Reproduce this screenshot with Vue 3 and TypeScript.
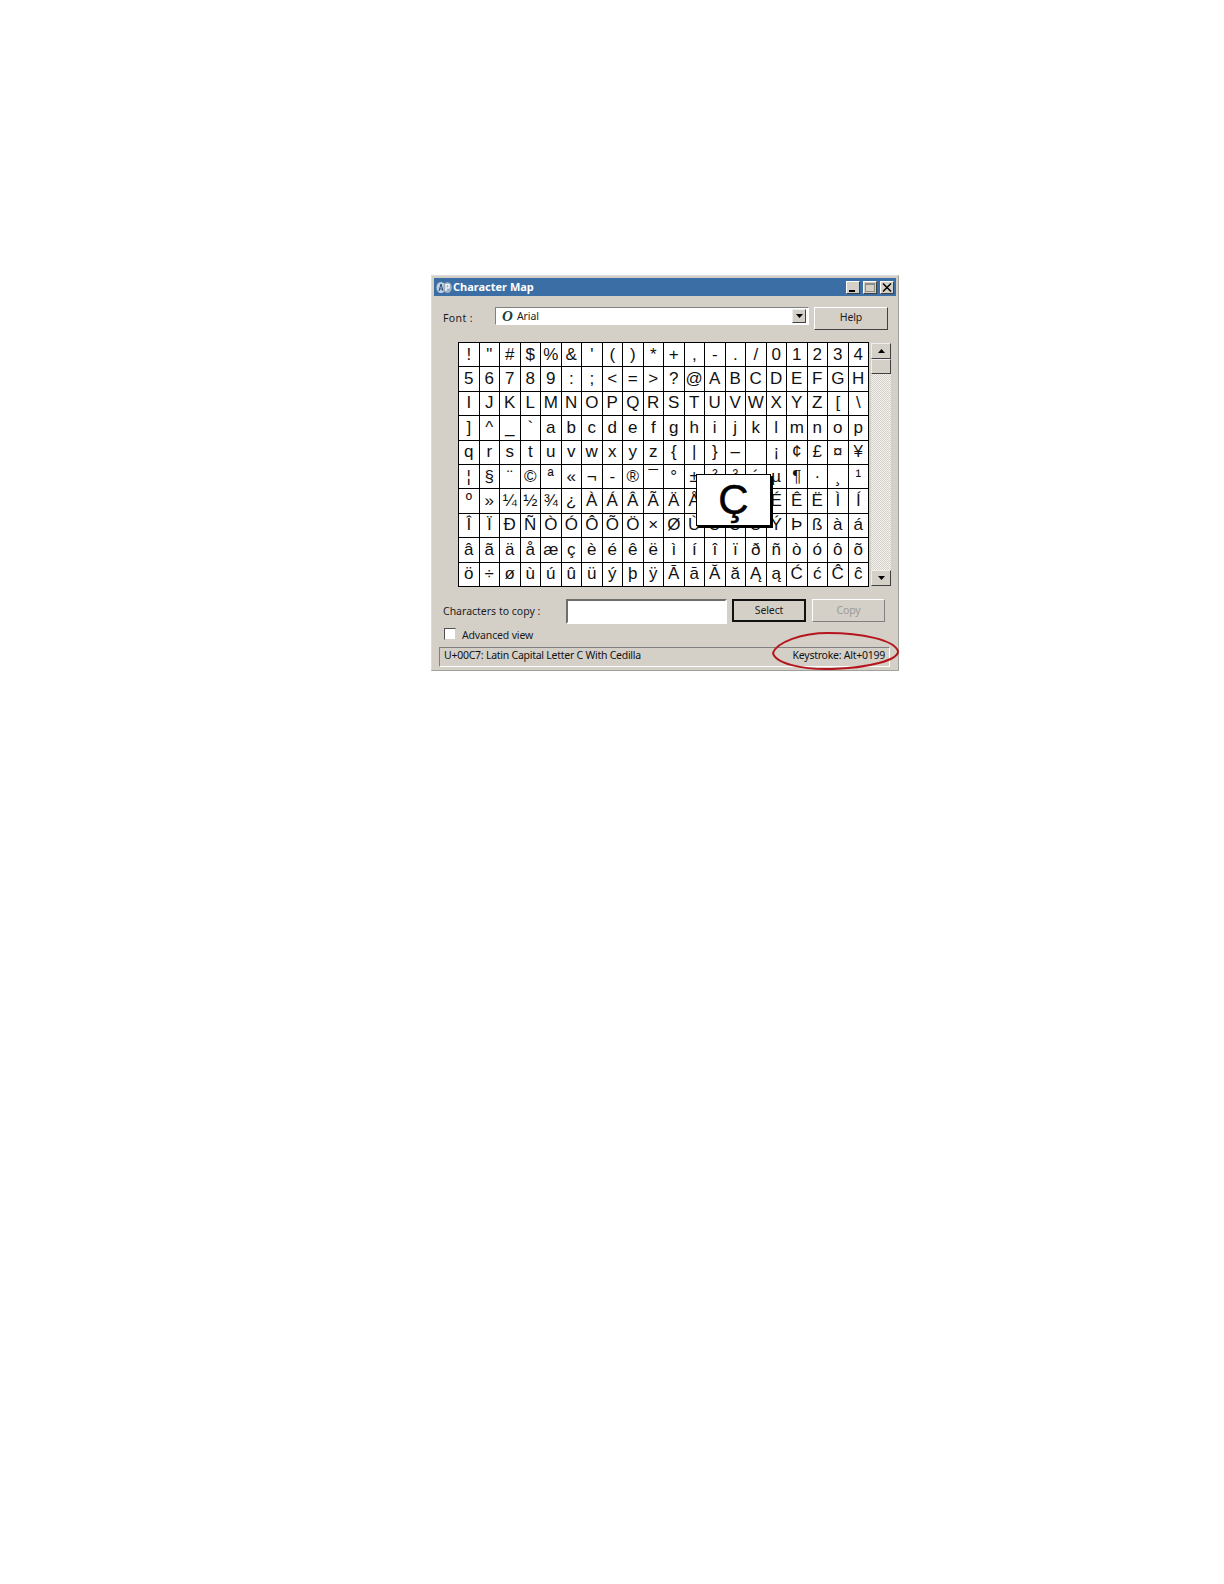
<script setup lang="ts">
const chars: string[] = Array.from(
  "!\"#$%&'()*+,-./01234" +
  "56789:;<=>?@ABCDEFGH" +
  "IJKLMNOPQRSTUVWXYZ[\\" +
  "]^_`abcdefghijklmnop" +
  "qrstuvwxyz{|}\u2013 ¡¢£¤¥" +
  "¦§¨©ª«¬-®¯°±²³´µ¶·¸¹" +
  "º»¼½¾¿ÀÁÂÃÄÅÆÇÈÉÊËÌÍ" +
  "ÎÏÐÑÒÓÔÕÖ×ØÙÚÛÜÝÞßàá" +
  "âãäåæçèéêëìíîïðñòóôõ" +
  "ö÷øùúûüýþÿĀāĂăĄąĆćĈĉ"
);
</script>

<template>
  <div class="page">
    <div class="window">
      <div class="titlebar">
        <svg class="app-icon" width="16" height="13" viewBox="0 0 16 13">
          <ellipse cx="5" cy="6.5" rx="4.5" ry="5.5" fill="#c4d0dc" />
          <ellipse cx="11.5" cy="6.5" rx="4.3" ry="5.5" fill="#9db0c4" />
          <path d="M3 10 L5 3 L7 10 M3.8 8 H6.2" stroke="#1f4e7e" stroke-width="1" fill="none" />
          <path d="M10 3 V10 M10 3.5 H13 V7 H10" stroke="#fff" stroke-width="1.2" fill="none" />
        </svg>
        <span class="title">Character Map</span>
        <div class="caption-buttons">
          <span class="cap"><svg width="12" height="11" viewBox="0 0 12 11"><rect x="2" y="8" width="6" height="2" fill="#000" /></svg></span>
          <span class="cap"><svg width="12" height="11" viewBox="0 0 12 11"><rect x="1.5" y="1.5" width="9" height="8" fill="none" stroke="#8d8d88" /><rect x="1" y="1" width="10" height="2" fill="#8d8d88" /></svg></span>
          <span class="cap"><svg width="12" height="11" viewBox="0 0 12 11"><path d="M2 1.5 L10 9.5 M10 1.5 L2 9.5" stroke="#000" stroke-width="1.5" /></svg></span>
        </div>
      </div>

      <div class="font-row">
        <span class="font-label">Font :</span>
        <div class="combo">
          <span class="font-o">O</span>
          <span class="font-name">Arial</span>
          <span class="combo-arrow"><svg width="7" height="4" viewBox="0 0 7 4"><path d="M0 0 H7 L3.5 4 Z" fill="#000" /></svg></span>
        </div>
        <div class="btn help">Help</div>
      </div>

      <div class="grid-row">
        <div class="grid">
          <div v-for="(c, i) in chars" :key="i" class="cell">{{ c }}</div>
        </div>
        <div class="scrollbar">
          <span class="sb-btn"><svg width="7" height="4" viewBox="0 0 7 4"><path d="M3.5 0 L7 4 H0 Z" fill="#000" /></svg></span>
          <span class="sb-thumb"></span>
          <span class="sb-track"></span>
          <span class="sb-btn"><svg width="7" height="4" viewBox="0 0 7 4"><path d="M0 0 H7 L3.5 4 Z" fill="#000" /></svg></span>
        </div>
      </div>

      <div class="copy-row">
        <span class="copy-label">Characters to copy :</span>
        <div class="copy-input"></div>
        <div class="btn select">Select</div>
        <div class="btn copy">Copy</div>
      </div>

      <div class="adv-row">
        <span class="checkbox"></span>
        <span class="adv-label">Advanced view</span>
      </div>

      <div class="statusbar">
        <span class="status-left">U+00C7: Latin Capital Letter C With Cedilla</span>
        <span class="status-right">Keystroke: Alt+0199</span>
      </div>

      <div class="magnifier">Ç</div>

      <svg class="ring" width="128" height="38" viewBox="0 0 128 38">
        <path d="M1 21 C5 10 30 1 56 1 C90 1 122 8 126 19 C127 28 96 36 60 37 C30 38 3 31 1 21 Z" fill="none" stroke="#b5161e" stroke-width="2" />
      </svg>
    </div>
  </div>
</template>

<style>
html, body { background: #fff; }
</style>

<style scoped>
.page {
  height: 1584px;
  box-sizing: border-box;
  padding: 275px 0 0 431px;
  background: #fff;
}
.window {
  position: relative;
  width: 468px;
  height: 396px;
  box-sizing: border-box;
  border: 1px solid #a0a09c;
  border-top-color: #dcdcd8;
  border-left-color: #dcdcd8;
  padding: 2px;
  background: #d4d0c8;
  font-family: "Noto Sans", "Open Sans", sans-serif;
  color: #1c1c1c;
  display: flex;
  flex-direction: column;
}
.titlebar {
  height: 18px;
  background: #3a6ea5;
  display: flex;
  align-items: center;
  padding: 0 2px 0 2px;
  flex: none;
}
.app-icon { flex: none; margin-right: 1px; }
.title {
  color: #fff;
  font: bold 11px "Noto Sans", sans-serif;
  margin-bottom: 2px;
}
.caption-buttons { margin-left: auto; display: flex; gap: 3px; }
.cap {
  width: 14px;
  height: 13px;
  background: #d4d0c8;
  box-sizing: border-box;
  border: 1px solid;
  border-color: #fff #404040 #404040 #fff;
  display: flex;
  align-items: center;
  justify-content: center;
  overflow: hidden;
}
.font-row {
  display: flex;
  align-items: flex-start;
  margin-top: 11px;
  padding-left: 9px;
  height: 35px;
  flex: none;
}
.font-label { font-size: 10.5px; line-height: 22px; width: 52px; letter-spacing: 0.4px; }
.combo {
  width: 314px;
  height: 18px;
  box-sizing: border-box;
  background: #fff;
  border: 1px solid;
  border-color: #808080 #fff #fff #808080;
  display: flex;
  align-items: center;
  padding-left: 6px;
}
.font-o {
  font: italic bold 15px "Liberation Serif", serif;
  color: #10403c;
  width: 15px;
}
.font-name { font-size: 10.5px; letter-spacing: -0.1px; }
.combo-arrow {
  margin-left: auto;
  margin-right: 2px;
  width: 14px;
  height: 14px;
  box-sizing: border-box;
  background: #d4d0c8;
  border: 1px solid;
  border-color: #eee #404040 #404040 #eee;
  display: flex;
  align-items: center;
  justify-content: center;
}
.btn {
  background: #d4d0c8;
  box-sizing: border-box;
  border: 1px solid;
  border-color: #fff #404040 #404040 #fff;
  display: flex;
  align-items: center;
  justify-content: center;
  font-size: 10.5px;
  letter-spacing: -0.1px;
  padding-bottom: 2px;
}
.help { width: 74px; height: 23px; margin-left: 5px; padding-bottom: 3px; }
.grid-row {
  display: flex;
  align-items: flex-start;
  padding-left: 24px;
  flex: none;
}
.grid {
  width: 411px;
  height: 245px;
  box-sizing: border-box;
  display: grid;
  grid-template-columns: repeat(20, 1fr);
  grid-template-rows: repeat(10, 1fr);
  gap: 1px;
  padding: 1px;
  background: #000;
}
.cell {
  background: #fff;
  color: #111;
  font: 17px "Liberation Sans", sans-serif;
  display: flex;
  align-items: center;
  justify-content: center;
  overflow: hidden;
}
.scrollbar {
  width: 20px;
  height: 243px;
  margin: 1px 0 0 2px;
  display: flex;
  flex-direction: column;
  flex: none;
}
.sb-btn {
  height: 16px;
  flex: none;
  box-sizing: border-box;
  background: #d4d0c8;
  border: 1px solid;
  border-color: #eee #404040 #404040 #eee;
  display: flex;
  align-items: center;
  justify-content: center;
}
.sb-thumb {
  height: 15px;
  flex: none;
  box-sizing: border-box;
  background: #d4d0c8;
  border: 1px solid;
  border-color: #eee #404040 #404040 #eee;
}
.sb-track {
  flex: 1;
  background-color: #e6e4df;
  background-image: repeating-conic-gradient(#d4d0c8 0 25%, #f4f3ef 0 50%);
  background-size: 2px 2px;
}
.copy-row {
  display: flex;
  align-items: flex-start;
  margin-top: 12px;
  padding-left: 9px;
  height: 25px;
  flex: none;
}
.copy-label { font-size: 10.5px; line-height: 25px; width: 123px; }
.copy-input {
  width: 161px;
  height: 25px;
  box-sizing: border-box;
  background: #fff;
  border: 2px solid;
  border-color: #6e6e6a #fff #fff #6e6e6a;
}
.select { width: 74px; height: 23px; margin-left: 5px; border: 2px solid #111; }
.copy { width: 73px; height: 23px; margin-left: 6px; color: #9a9a96; border-color: #fff #808080 #808080 #fff; }
.adv-row {
  display: flex;
  align-items: center;
  margin-top: 4px;
  padding-left: 10px;
  height: 12px;
  flex: none;
}
.checkbox {
  width: 12px;
  height: 12px;
  box-sizing: border-box;
  background: #fff;
  border: 1px solid;
  border-color: #505050 #d4d0c8 #d4d0c8 #505050;
  margin-right: 6px;
}
.adv-label { font-size: 10.5px; line-height: 14px; margin-top: 2px; letter-spacing: -0.15px; }
.statusbar {
  margin: 7px 0 0 5px;
  width: 451px;
  height: 20px;
  flex: none;
  box-sizing: border-box;
  border: 1px solid;
  border-color: #808080 #fff #fff #808080;
  display: flex;
  align-items: center;
  justify-content: space-between;
  padding: 0 4px 4px;
  font-size: 10.5px;
  letter-spacing: -0.25px;
  color: #111;
}
.magnifier {
  position: absolute;
  left: 264px;
  top: 198px;
  width: 75px;
  height: 52px;
  box-sizing: border-box;
  background: #fff;
  border: 1px solid #000;
  box-shadow: 2px 2px 0 #000;
  color: #000;
  font: 42px "Liberation Sans", sans-serif;
  -webkit-text-stroke: 0.5px #000;
  display: flex;
  align-items: center;
  justify-content: center;
}
.ring {
  position: absolute;
  left: 340px;
  top: 356px;
  overflow: visible;
}
</style>
